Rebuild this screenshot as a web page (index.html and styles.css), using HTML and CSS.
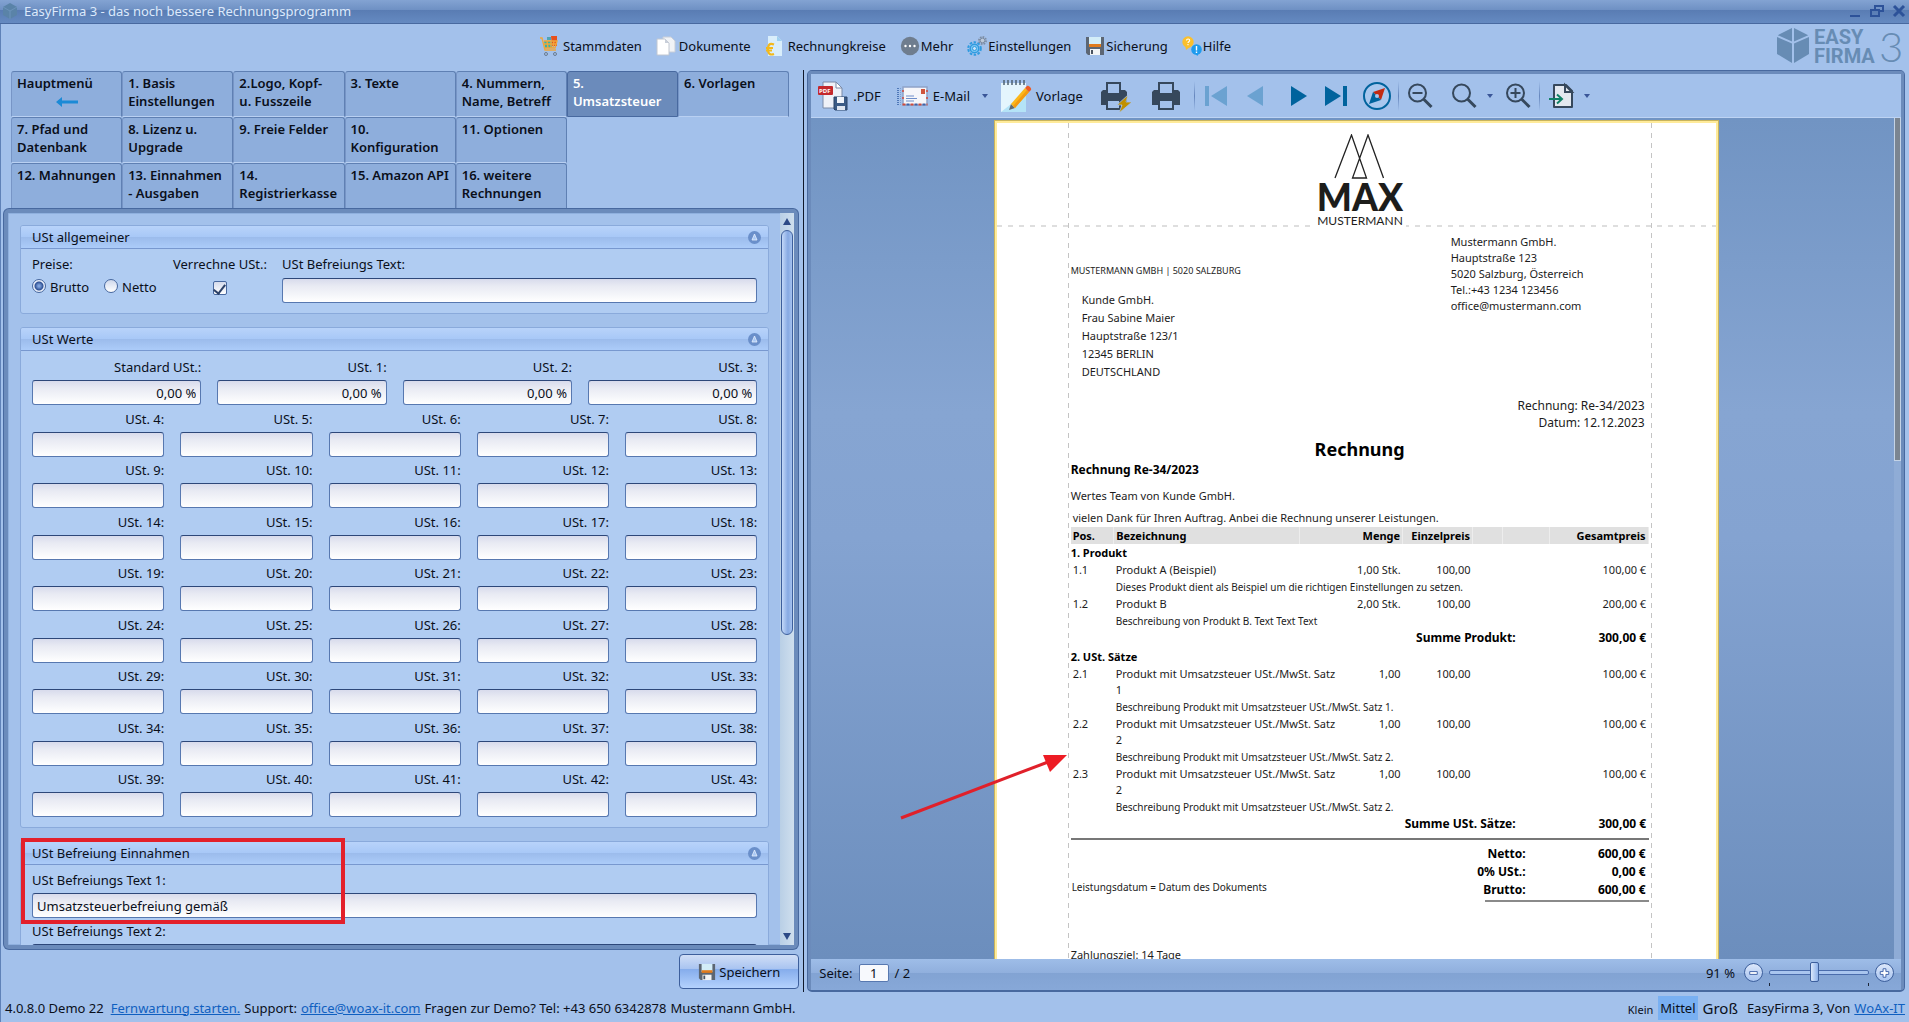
FILE: index.html
```html
<!DOCTYPE html>
<html lang="de">
<head>
<meta charset="utf-8">
<title>EasyFirma 3 - das noch bessere Rechnungsprogramm</title>
<link rel="stylesheet" href="styles.css">
</head>
<body>
<header class="titlebar">
  <svg class="app-mark" viewBox="0 0 16 16" width="16" height="16"><path d="M8 0l7 4v8l-7 4-7-4V4z" fill="#5a83a8"/><path d="M1 4l7 4 7-4M8 8v8" stroke="#6c93bb" fill="none"/></svg>
  <span class="caption">EasyFirma 3 - das noch bessere Rechnungsprogramm</span>
  <div class="window-buttons">
    <button aria-label="Minimieren"><svg viewBox="0 0 16 16" width="16" height="16"><path d="M3 12h10v2H3z" fill="#2d5299"/></svg></button>
    <button aria-label="Wiederherstellen"><svg viewBox="0 0 16 16" width="16" height="16"><path d="M2 7h8v6H2zM6 6V3h8v5h-3" fill="none" stroke="#2d5299" stroke-width="2"/></svg></button>
    <button aria-label="Schließen"><svg viewBox="0 0 16 16" width="16" height="16"><path d="M3 3l10 10M13 3L3 13" stroke="#2d5299" stroke-width="3"/></svg></button>
  </div>
</header>

<div class="menubar">
  <nav class="menu">
    <button><svg viewBox="0 0 20 20" width="20" height="20"><path d="M7 1h4v3H7z" fill="#4ea5b5"/><path d="M11 0h6v10h-5z" fill="#e8501c"/><path d="M4 5h8v7H5z" fill="#39b3a8"/><path d="M0 2h2l3 12h11M4 5h13l-2 7H5M7 5l1 7M11 5v7M14 5l-1 7M4 8h12" fill="none" stroke="#f0a63a" stroke-width="1.4"/><circle cx="6" cy="18" r="1.5" fill="none" stroke="#6a7c90"/><circle cx="15" cy="18" r="1.5" fill="none" stroke="#6a7c90"/></svg>Stammdaten</button>
    <button><svg viewBox="0 0 20 20" width="20" height="20"><path d="M7 1h8l4 4v11H7z" fill="#f1f3f6" stroke="#c8ced8"/><path d="M1 3h8l4 4v12H1z" fill="#fff" stroke="#c0c6d0"/><path d="M9 3v4h4z" fill="#c9cfda"/></svg>Dokumente</button>
    <button><svg viewBox="0 0 20 20" width="20" height="20"><path d="M3 0h9l5 5v15H3z" fill="#d9eefb"/><path d="M12 0l5 5h-5z" fill="#9dd0f0"/><path d="M9 8.500c-5-2-6 1-6 5s2 6 6 4.500M1 12h7M1 14.500h6" fill="none" stroke="#f4b91b" stroke-width="2.200"/></svg>Rechnungkreise</button>
    <button><svg viewBox="0 0 20 20" width="20" height="20"><circle cx="10" cy="10" r="9.200" fill="#6f7d8e"/><g fill="#fff"><circle cx="5.500" cy="10" r="1.200"/><circle cx="10" cy="10" r="1.200"/><circle cx="14.500" cy="10" r="1.200"/></g></svg>Mehr</button>
    <button><svg viewBox="0 0 20 20" width="20" height="20"><circle cx="7.500" cy="12.500" r="6.300" fill="none" stroke="#2f9be0" stroke-width="2" stroke-dasharray="2.500 1.500"/><circle cx="7.500" cy="12.500" r="4.300" fill="#7cc6f2" stroke="#2f9be0" stroke-width="1.500"/><circle cx="7.500" cy="12.500" r="2" fill="#c9e4fa" stroke="#2f9be0"/><circle cx="15.500" cy="4.500" r="3.500" fill="none" stroke="#7d8da3" stroke-width="2" stroke-dasharray="1.600 1.100"/><circle cx="15.500" cy="4.500" r="2.300" fill="#bcc9da" stroke="#7d8da3"/></svg>Einstellungen</button>
    <button><svg viewBox="0 0 20 20" width="20" height="20"><path d="M1 1h18v18H3l-2-2z" fill="#5c6673"/><path d="M4 1h12v9H4z" fill="#d3edf8"/><path d="M4 8h12v3H4z" fill="#e07b1d"/><path d="M5 13h10v6H5z" fill="#f2f4f6"/><path d="M6 14h2v4H6z" fill="#4a5360"/></svg>Sicherung</button>
    <button><svg viewBox="0 0 20 20" width="20" height="20"><circle cx="6" cy="6" r="5.700" fill="#fbc02d"/><path d="M3 9l1 5 4-3z" fill="#fbc02d"/><path d="M4.500 4.500c0-2 3.200-2 3.200 0 0 1.200-1.700 1.200-1.700 2.500M6 8v1.200" stroke="#fff" stroke-width="1.100" fill="none"/><circle cx="14.500" cy="13.500" r="5.300" fill="#1e9bee"/><path d="M12 17l3.500 3 1.500-4z" fill="#1e9bee"/><path d="M14.500 10v4.500M14.500 15.500V17" stroke="#fff" stroke-width="1.400"/></svg>Hilfe</button>
  </nav>
  <svg class="brand" viewBox="0 0 130 40" width="130" height="40" role="img" aria-label="Easy Firma 3">
    <g fill="#678cb4"><path d="M15 2v13.500L.8 9.200z"/><path d="M17 2v13.500l14.200-6.300z"/><path d="M0 11l15 6.600V37L0 28z"/><path d="M32 11l-15 6.600V37l15-9z"/>
    <text x="37" y="18" class="brand-name">EASY</text><text x="37" y="37" class="brand-name">FIRMA</text><text x="102" y="36" class="brand-digit">3</text></g>
  </svg>
</div>

<main class="work">
  <section class="settings">
    <nav class="tabs">
      <button>Hauptmenü<svg class="back" viewBox="0 0 22 10" width="22" height="10"><path d="M0 5l6-5v3.500h16v3H6V10z" fill="#1b8ad6"/></svg></button>
      <button>1. Basis<br>Einstellungen</button>
      <button>2.Logo, Kopf-<br>u. Fusszeile</button>
      <button>3. Texte</button>
      <button>4. Nummern,<br>Name, Betreff</button>
      <button class="active">5.<br>Umsatzsteuer</button>
      <button>6. Vorlagen</button>
      <button class="row-start">7. Pfad und<br>Datenbank</button>
      <button>8. Lizenz u.<br>Upgrade</button>
      <button>9. Freie Felder</button>
      <button>10.<br>Konfiguration</button>
      <button>11. Optionen</button>
      <button class="row-start">12. Mahnungen</button>
      <button>13. Einnahmen<br>- Ausgaben</button>
      <button>14.<br>Registrierkasse</button>
      <button>15. Amazon API</button>
      <button>16. weitere<br>Rechnungen</button>
    </nav>

    <div class="panel">
      <div class="panel-content">
        <section class="group">
          <h2>USt allgemeiner<svg class="fold" viewBox="0 0 13 13" width="13" height="13"><circle cx="6.500" cy="6.500" r="6.500" fill="#6a8fca"/><path d="M6.500 3l2.500 6H4z" fill="#a9c8f5" stroke="#e6effc" stroke-width=".8"/></svg></h2>
          <div class="general">
            <div>
              <span class="label">Preise:</span>
              <div class="choices">
                <label><input type="radio" name="preise" checked>Brutto</label>
                <label><input type="radio" name="preise">Netto</label>
              </div>
            </div>
            <div class="charge">
              <label class="label" for="verrechne">Verrechne USt.:</label>
              <input type="checkbox" id="verrechne" checked>
            </div>
            <div>
              <label class="label" for="befreiung">USt Befreiungs Text:</label>
              <input class="box" type="text" id="befreiung">
            </div>
          </div>
        </section>

        <section class="group">
          <h2>USt Werte<svg class="fold" viewBox="0 0 13 13" width="13" height="13"><circle cx="6.500" cy="6.500" r="6.500" fill="#6a8fca"/><path d="M6.500 3l2.500 6H4z" fill="#a9c8f5" stroke="#e6effc" stroke-width=".8"/></svg></h2>
          <div class="rates">
            <label class="wide">Standard USt.:<input class="box" type="text" value="0,00 %"></label>
            <label class="wide">USt. 1:<input class="box" type="text" value="0,00 %"></label>
            <label class="wide">USt. 2:<input class="box" type="text" value="0,00 %"></label>
            <label class="wide">USt. 3:<input class="box" type="text" value="0,00 %"></label>
            <label>USt. 4:<input class="box" type="text"></label>
            <label>USt. 5:<input class="box" type="text"></label>
            <label>USt. 6:<input class="box" type="text"></label>
            <label>USt. 7:<input class="box" type="text"></label>
            <label>USt. 8:<input class="box" type="text"></label>
            <label>USt. 9:<input class="box" type="text"></label>
            <label>USt. 10:<input class="box" type="text"></label>
            <label>USt. 11:<input class="box" type="text"></label>
            <label>USt. 12:<input class="box" type="text"></label>
            <label>USt. 13:<input class="box" type="text"></label>
            <label>USt. 14:<input class="box" type="text"></label>
            <label>USt. 15:<input class="box" type="text"></label>
            <label>USt. 16:<input class="box" type="text"></label>
            <label>USt. 17:<input class="box" type="text"></label>
            <label>USt. 18:<input class="box" type="text"></label>
            <label>USt. 19:<input class="box" type="text"></label>
            <label>USt. 20:<input class="box" type="text"></label>
            <label>USt. 21:<input class="box" type="text"></label>
            <label>USt. 22:<input class="box" type="text"></label>
            <label>USt. 23:<input class="box" type="text"></label>
            <label>USt. 24:<input class="box" type="text"></label>
            <label>USt. 25:<input class="box" type="text"></label>
            <label>USt. 26:<input class="box" type="text"></label>
            <label>USt. 27:<input class="box" type="text"></label>
            <label>USt. 28:<input class="box" type="text"></label>
            <label>USt. 29:<input class="box" type="text"></label>
            <label>USt. 30:<input class="box" type="text"></label>
            <label>USt. 31:<input class="box" type="text"></label>
            <label>USt. 32:<input class="box" type="text"></label>
            <label>USt. 33:<input class="box" type="text"></label>
            <label>USt. 34:<input class="box" type="text"></label>
            <label>USt. 35:<input class="box" type="text"></label>
            <label>USt. 36:<input class="box" type="text"></label>
            <label>USt. 37:<input class="box" type="text"></label>
            <label>USt. 38:<input class="box" type="text"></label>
            <label>USt. 39:<input class="box" type="text"></label>
            <label>USt. 40:<input class="box" type="text"></label>
            <label>USt. 41:<input class="box" type="text"></label>
            <label>USt. 42:<input class="box" type="text"></label>
            <label>USt. 43:<input class="box" type="text"></label>
          </div>
        </section>

        <section class="group exempt">
          <h2>USt Befreiung Einnahmen<svg class="fold" viewBox="0 0 13 13" width="13" height="13"><circle cx="6.500" cy="6.500" r="6.500" fill="#6a8fca"/><path d="M6.500 3l2.500 6H4z" fill="#a9c8f5" stroke="#e6effc" stroke-width=".8"/></svg></h2>
          <div class="texts">
            <label>USt Befreiungs Text 1:<input class="box" type="text" value="Umsatzsteuerbefreiung gemäß"></label>
            <label>USt Befreiungs Text 2:<input class="box" type="text"></label>
          </div>
          <div class="highlight"></div>
        </section>
      </div>
      <div class="scrollbar"><i class="up"></i><div class="track"><div class="thumb"></div></div><i class="down"></i></div>
    </div>

    <div class="actions">
      <button class="save"><svg viewBox="0 0 20 20" width="18" height="18"><path d="M1 1h18v18H3l-2-2z" fill="#5c6673"/><path d="M4 1h12v9H4z" fill="#d3edf8"/><path d="M4 8h12v3H4z" fill="#e07b1d"/><path d="M5 13h10v6H5z" fill="#f2f4f6"/><path d="M6 14h2v4H6z" fill="#4a5360"/></svg>Speichern</button>
    </div>
  </section>

  <section class="viewer">
    <div class="toolbar">
      <button><svg viewBox="0 0 32 32" width="32" height="32"><path d="M6 2h13l6 6v20H6z" fill="#eef1f8" stroke="#7b8ba8"/><path d="M19 2v6h6z" fill="#fff" stroke="#7b8ba8"/><rect x="1" y="6" width="15" height="9" rx="1" fill="#c4282c"/><text x="2" y="13" class="pdf-tag">PDF</text><path d="M17 17h13v13H18l-1-1z" fill="#3b5b85" stroke="#2b4468"/><path d="M20 17h7v6h-7z" fill="#f0f4fa"/><path d="M20 26h8v4h-8z" fill="#dfe6f0"/></svg>.PDF</button>
      <button class="mail"><svg viewBox="0 0 32 32" width="32" height="32"><path d="M1 8v17" stroke="#4f78b8" stroke-width="2" stroke-dasharray="1 1"/><path d="M3.500 8v17" stroke="#7e9fd3" stroke-dasharray="1 1"/><rect x="6" y="7" width="24" height="18" fill="#f5f6fa"/><rect x="6" y="7" width="24" height="18" fill="none" stroke="#8fa3c8" stroke-width="1.500"/><path d="M5.500 24.500h25" stroke="#d04a3c" stroke-width="2" stroke-dasharray="3 5"/><path d="M9.500 24.500h21" stroke="#3f62a8" stroke-width="2" stroke-dasharray="3 5"/><path d="M6 10v14M30 10v14" stroke="#d04a3c" stroke-width="1.500" stroke-dasharray="2 5"/><path d="M24 9h4v5h-4z" fill="#d0543c"/><path d="M9 16h8M9 18.500h11M9 21h8" stroke="#6f8fcb"/></svg>E-Mail<i class="caret"></i></button>
      <button class="template"><svg viewBox="0 0 32 32" width="32" height="32"><path d="M1 3h25v29H1z" fill="#e4f5fd"/><path d="M1 32L26 12v20z" fill="#b4e3f7"/><path d="M4 0v5M8 0v5M12 0v5M16 0v5M20 0v5M24 0v5" stroke="#4e6070" stroke-width="1.500"/><path d="M9 30l2-6 4 4z" fill="#5f6a74"/><path d="M11 24L25 8l4 4-14 16z" fill="#fbb71a"/><path d="M13 26L27 10l2 2-14 16z" fill="#f39a12"/><path d="M25 8l2-2c1-1 5 2 4 4l-2 2z" fill="#ee5a24"/></svg>Vorlage</button>
      <button class="icon-only quick"><svg viewBox="0 0 32 32" width="32" height="32" aria-label="Schnelldruck"><path d="M2 12l2-2h22l2 2v13H2z" fill="#36485c"/><path d="M8 14V3h13v11z" fill="#a3c1eb" stroke="#36485c" stroke-width="2"/><path d="M8 20h13v9H8z" fill="#a3c1eb" stroke="#36485c" stroke-width="2"/><path d="M29 15l-11 10h5l-3 8 13-11h-6z" fill="#c09000" stroke="#a3c1eb" stroke-width=".8"/></svg></button>
      <button class="icon-only print"><svg viewBox="0 0 32 32" width="32" height="32" aria-label="Drucken"><path d="M2 12l2-2h24l2 2v13H2z" fill="#36485c"/><path d="M9 14V3h14v11z" fill="#a3c1eb" stroke="#36485c" stroke-width="2"/><path d="M9 20h14v9H9z" fill="#a3c1eb" stroke="#36485c" stroke-width="2"/></svg></button>
      <i class="rule"></i>
      <button class="icon-only" disabled><svg viewBox="0 0 32 32" width="32" height="32" aria-label="Erste Seite"><path d="M5 6h4v20H5zM27 6v20L11 16z" fill="#6ba2d1"/></svg></button>
      <button class="icon-only prev" disabled><svg viewBox="0 0 32 32" width="32" height="32" aria-label="Vorherige Seite"><path d="M24 6v20L8 16z" fill="#6ba2d1"/></svg></button>
      <button class="icon-only next"><svg viewBox="0 0 32 32" width="32" height="32" aria-label="Nächste Seite"><path d="M8 6v20l16-10z" fill="#00639d"/></svg></button>
      <button class="icon-only last"><svg viewBox="0 0 32 32" width="32" height="32" aria-label="Letzte Seite"><path d="M5 6v20l16-10zM23 6h4v20h-4z" fill="#00639d"/></svg></button>
      <button class="icon-only compass"><svg viewBox="0 0 32 32" width="32" height="32" aria-label="Navigation"><circle cx="16" cy="16" r="13" fill="#a8c7ee" stroke="#00639d" stroke-width="2"/><path d="M24 8l-4 12-8-8z" fill="#c22a12"/><path d="M8 24l4-12 8 8z" fill="#00639d"/><circle cx="16" cy="16" r="2" fill="#a8c7ee"/></svg></button>
      <i class="rule"></i>
      <button class="icon-only reduce"><svg viewBox="0 0 32 32" width="32" height="32" aria-label="Verkleinern"><circle cx="13.500" cy="13" r="8.500" fill="none" stroke="#36485c" stroke-width="2"/><path d="M8.500 13h10" stroke="#36485c" stroke-width="2"/><path d="M19.500 19l8 8" stroke="#36485c" stroke-width="3"/></svg></button>
      <button class="icon-only zoom"><svg viewBox="0 0 32 32" width="32" height="32" aria-label="Zoom"><circle cx="13.500" cy="13" r="8.500" fill="none" stroke="#36485c" stroke-width="2"/><path d="M19.500 19l8 8" stroke="#36485c" stroke-width="3"/></svg><i class="caret"></i></button>
      <button class="icon-only enlarge"><svg viewBox="0 0 32 32" width="32" height="32" aria-label="Vergrößern"><circle cx="13.500" cy="13" r="8.500" fill="none" stroke="#36485c" stroke-width="2"/><path d="M8.500 13h10M13.500 8v10" stroke="#36485c" stroke-width="2"/><path d="M19.500 19l8 8" stroke="#36485c" stroke-width="3"/></svg></button>
      <i class="rule"></i>
      <button class="icon-only export"><svg viewBox="0 0 32 32" width="32" height="32" aria-label="Exportieren"><path d="M9 5h12l6 6v16H9z" fill="#e3e8ef" stroke="#36485c" stroke-width="2" stroke-linejoin="round"/><path d="M20 5v7h7z" fill="#e3e8ef" stroke="#36485c" stroke-width="2"/><path d="M4 19h12M12 14.500l5 4.500-5 4.500" fill="none" stroke="#0f8066" stroke-width="2"/></svg><i class="caret"></i></button>
    </div>

    <div class="preview">
      <article class="page">
        <div class="guide guide-left"></div><div class="guide guide-right"></div><div class="guide guide-top"></div>
        <svg class="annotation" viewBox="0 0 170 70" width="170" height="70"><path d="M1 66L148 10" stroke="#e0202a" stroke-width="3"/><path d="M167 3l-17 17-7-17z" fill="#ed1c24"/></svg>

        <svg class="logo" viewBox="0 0 92 94" width="92" height="94" role="img" aria-label="Max Mustermann">
          <path d="M21 44L37.500 1 52.500 44h-14L54 1l15.500 43" fill="none" stroke="#222" stroke-width="1.300"/>
          <text x="46" y="77" class="logo-max">MAX</text><text x="46" y="91" class="logo-sub">MUSTERMANN</text>
        </svg>
        <div class="addresses">
          <div class="recipient">
            <p class="return">MUSTERMANN GMBH | 5020 SALZBURG</p>
            <address>Kunde GmbH.<br>Frau Sabine Maier<br>Hauptstraße 123/1<br>12345 BERLIN<br>DEUTSCHLAND</address>
          </div>
          <address class="sender">Mustermann GmbH.<br>Hauptstraße 123<br>5020 Salzburg, Österreich<br>Tel.:+43 1234 123456<br>office@mustermann.com</address>
        </div>
        <p class="meta">Rechnung: Re-34/2023<br>Datum: 12.12.2023</p>
        <h1>Rechnung</h1>
        <h3>Rechnung Re-34/2023</h3>
        <p class="salutation">Wertes Team von Kunde GmbH.</p>
        <p class="intro">vielen Dank für Ihren Auftrag. Anbei die Rechnung unserer Leistungen.</p>
        <table class="items">
          <colgroup><col class="c-pos"><col class="c-name"><col class="c-qty"><col class="c-price"><col class="c-a"><col class="c-b"><col></colgroup>
          <thead><tr><th>Pos.</th><th>Bezeichnung</th><th class="r">Menge</th><th class="r">Einzelpreis</th><th></th><th></th><th class="r">Gesamtpreis</th></tr></thead>
          <tbody>
            <tr class="section"><td colspan="7">1. Produkt</td></tr>
            <tr><td>1.1</td><td>Produkt A (Beispiel)</td><td class="r">1,00 Stk.</td><td class="r">100,00</td><td></td><td></td><td class="r">100,00 €</td></tr>
            <tr class="desc"><td></td><td colspan="6">Dieses Produkt dient als Beispiel um die richtigen Einstellungen zu setzen.</td></tr>
            <tr><td>1.2</td><td>Produkt B</td><td class="r">2,00 Stk.</td><td class="r">100,00</td><td></td><td></td><td class="r">200,00 €</td></tr>
            <tr class="desc"><td></td><td colspan="6">Beschreibung von Produkt B. Text Text Text</td></tr>
            <tr class="sum"><td colspan="6" class="r">Summe Produkt:</td><td class="r">300,00 €</td></tr>
            <tr class="section"><td colspan="7">2. USt. Sätze</td></tr>
            <tr><td>2.1</td><td>Produkt mit Umsatzsteuer USt./MwSt. Satz<br>1</td><td class="r">1,00</td><td class="r">100,00</td><td></td><td></td><td class="r">100,00 €</td></tr>
            <tr class="desc"><td></td><td colspan="6">Beschreibung Produkt mit Umsatzsteuer USt./MwSt. Satz 1.</td></tr>
            <tr><td>2.2</td><td>Produkt mit Umsatzsteuer USt./MwSt. Satz<br>2</td><td class="r">1,00</td><td class="r">100,00</td><td></td><td></td><td class="r">100,00 €</td></tr>
            <tr class="desc"><td></td><td colspan="6">Beschreibung Produkt mit Umsatzsteuer USt./MwSt. Satz 2.</td></tr>
            <tr><td>2.3</td><td>Produkt mit Umsatzsteuer USt./MwSt. Satz<br>2</td><td class="r">1,00</td><td class="r">100,00</td><td></td><td></td><td class="r">100,00 €</td></tr>
            <tr class="desc"><td></td><td colspan="6">Beschreibung Produkt mit Umsatzsteuer USt./MwSt. Satz 2.</td></tr>
            <tr class="sum"><td colspan="6" class="r">Summe USt. Sätze:</td><td class="r">300,00 €</td></tr>
          </tbody>
        </table>
        <div class="closing">
          <p class="service-date">Leistungsdatum = Datum des Dokuments</p>
          <table class="totals">
            <tr><th>Netto:</th><td>600,00 €</td></tr>
            <tr><th>0% USt.:</th><td>0,00 €</td></tr>
            <tr><th>Brutto:</th><td>600,00 €</td></tr>
          </table>
        </div>
        <p class="terms">Zahlungsziel: 14 Tage</p>
      </article>
      <div class="preview-scroll"><div class="preview-thumb"></div></div>
    </div>

    <div class="statusbar">
      <label for="seite">Seite:</label><input class="page-no" type="text" id="seite" value="1"><span>/ 2</span>
      <span class="percent">91 %</span>
      <button class="round" aria-label="Kleiner"><svg viewBox="0 0 18 18" width="18" height="18"><path d="M5 7.500h8v3H5z" fill="#fff" stroke="#3f62a8"/></svg></button>
      <input class="slider" type="range" min="0" max="100" value="45" aria-label="Zoom">
      <button class="round" aria-label="Größer"><svg viewBox="0 0 18 18" width="18" height="18"><path d="M7.500 4.500h3v3h3v3h-3v3h-3v-3h-3v-3h3z" fill="#fff" stroke="#3f62a8"/></svg></button>
    </div>
  </section>
</main>

<footer class="footer">
  <span class="version">4.0.8.0 Demo 22</span>
  <a href="#fernwartung">Fernwartung starten.</a>
  <span>Support:</span>
  <a href="mailto:office@woax-it.com">office@woax-it.com</a>
  <span>Fragen zur Demo? Tel: +43 650 6342878</span>
  <span>Mustermann GmbH.</span>
  <div class="sizes"><button class="small">Klein</button><button class="medium">Mittel</button><button class="large">Groß</button></div>
  <span>EasyFirma 3, Von</span>
  <a href="#woax">WoAx-IT</a>
</footer>
</body>
</html>
```
FILE: styles.css
```css
* { box-sizing: border-box; }
body {
  margin: 0;
  height: 100vh;
  display: flex;
  flex-direction: column;
  overflow: hidden;
  background: #a3c1eb;
  color: #0a0f1a;
  font: 13px/18px "Noto Sans", "Open Sans", sans-serif;
}
button, input { font: inherit; color: inherit; }
button { border: 0; padding: 0; background: none; white-space: nowrap; }
h1, h2, h3, p { margin: 0; }
address { font-style: normal; }
a { color: #0f5fc0; }

/* window caption */
.titlebar {
  flex: none;
  height: 24px;
  display: flex;
  align-items: center;
  padding: 0 0 2px 2px;
  border-bottom: 1px solid #48699f;
  background: linear-gradient(#83a3d2, #6e90c3 10px, #597cb3 10px, #658ac1);
  color: #dce9fb;
}
.app-mark { margin-right: 6px; }
.window-buttons { margin-left: auto; display: flex; gap: 4px; }
.window-buttons button { display: flex; width: 18px; }

/* main menu */
.menubar { flex: none; height: 46px; display: flex; border-left: 1px solid #5f82b8; }
.menu { flex: 1; display: flex; justify-content: center; align-items: center; gap: 14px; padding: 0 7px 2px 0; }
.menu button { display: flex; align-items: center; gap: 3px; }
.menu button:nth-child(n+4) { gap: 1px; }
.brand { flex: none; margin: 2px 2px 0 0; overflow: visible; }
.brand-name { font: 700 20px Roboto, sans-serif; }
.brand-digit { font: 300 42px Lato, sans-serif; }

.work { flex: 1; min-height: 0; display: grid; grid-template-columns: 421fr 579fr; border-left: 1px solid #5f82b8; }

/* left side */
.settings { display: flex; flex-direction: column; min-height: 0; min-width: 0; padding: 1px 4px 3px 2px; border-right: 1px solid #10182a; }
.tabs { flex: none; display: grid; grid-template-columns: repeat(7, 1fr); grid-auto-rows: 46px; margin: 0 10px 0 8px; }
.tabs button {
  display: flex;
  flex-direction: column;
  text-align: left;
  padding: 2px 4px 0 5px;
  border: 1px solid #5f80b3;
  border-bottom-color: #b9d0f2;
  border-left-color: #7795c6;
  border-radius: 3px 3px 0 0;
  background: #8eaedc;
  font-weight: 600;
}
.tabs .active { background: #6b8bbb; border-color: #48699f; color: #fff; }
.tabs .row-start { grid-column: 1; }
.back { margin: 5px auto 0 39px; }

.panel {
  flex: 1;
  min-height: 0;
  display: flex;
  border: 4px solid #6b8bbb;
  border-radius: 5px;
  box-shadow: inset 0 0 0 1px #8fb0de, 0 0 0 1px #48699f;
  margin: 0 1px;
  background: #a3c1eb;
}
.panel-content { flex: 1; min-width: 0; overflow: hidden; display: flex; flex-direction: column; gap: 13px; padding: 12px 11px 0 12px; }
.group { flex: none; border: 1px solid #8aaadb; border-radius: 3px; background: #b0ccf2; }
.group h2 {
  display: flex;
  align-items: center;
  justify-content: space-between;
  height: 23px;
  padding: 0 7px 0 11px;
  border-bottom: 1px solid #7898cf;
  border-radius: 2px 2px 0 0;
  background: linear-gradient(#b8d3fa, #a8c8f7 50%, #9cbcec 52%, #acccf9);
  font-size: 13px;
  font-weight: 400;
}
.label { display: block; }
.box {
  display: block;
  width: 100%;
  height: 25px;
  border: 1px solid #5778b0;
  border-top-color: #2d4779;
  border-radius: 3px;
  padding: 0 4px;
  background: linear-gradient(#d8dbec, #e8eaf3 30%, #fff);
  outline: 0;
}
.general { display: grid; grid-template-columns: 125px 93px 1fr; gap: 16px; padding: 6px 11px 10px; }
.general .label { margin-bottom: 5px; }
.choices { display: flex; gap: 15px; }
.choices label { display: flex; align-items: center; gap: 4px; }
input[type="radio"] {
  appearance: none;
  margin: 0 0 2px;
  width: 14px;
  height: 14px;
  border: 1px solid #48689f;
  border-radius: 50%;
  background: linear-gradient(#cfd8ec, #fff);
}
input[type="radio"]:checked { background: radial-gradient(circle, #7fa2dc 1px, #2d4f93 4px, #e8eefa 5px); }
input[type="checkbox"] {
  appearance: none;
  display: grid;
  margin: 8px auto 0;
  width: 14px;
  height: 14px;
  border: 1px solid #48689f;
  border-radius: 2px;
  background: linear-gradient(#d5dbec, #fff);
}
input[type="checkbox"]:checked::before {
  content: "";
  margin: 0 auto;
  width: 5px;
  height: 10px;
  border: solid #2c4168;
  border-width: 0 2px 2px 0;
  rotate: 38deg;
}
.charge { white-space: nowrap; }
/* the nine rows share the height of the group evenly */
.rates {
  display: grid;
  grid-template-columns: repeat(20, 1fr);
  grid-template-rows: repeat(9, 1fr);
  column-gap: 16px;
  min-height: 464px;
  margin: 7px 11px 5px;
}
.rates label { grid-column: span 4; text-align: right; }
.rates .wide { grid-column: span 5; }
.rates .box, .texts .box { margin-top: 4px; text-align: inherit; }
.exempt { position: relative; }
.texts { display: grid; gap: 4px; padding: 6px 11px 10px; }
.highlight { position: absolute; left: 0; top: -4px; width: 324px; height: 86px; border: 4px solid #e3202b; }

.scrollbar { flex: none; width: 14px; display: flex; flex-direction: column; align-items: center; background: linear-gradient(90deg, #b9cfe6, #cfdfee); }
.up, .down { border: 4px solid transparent; }
.up { border-top: 0; border-bottom: 7px solid #2d4a86; margin: 5px 0; }
.down { border-bottom: 0; border-top: 7px solid #2d4a86; margin: 5px 0; }
.track { flex: 1; width: 12px; }
.thumb { height: 58%; border: 1px solid #3d5f9c; border-radius: 6px; background: linear-gradient(90deg, #c3d8f8, #86a9e2 60%, #a5c2ef); }

.actions { flex: none; display: flex; justify-content: flex-end; padding-top: 5px; }
.save {
  display: flex;
  align-items: center;
  justify-content: center;
  gap: 3px;
  width: 120px;
  height: 35px;
  border: 1px solid #3d5f9c;
  border-radius: 4px;
  background: linear-gradient(#d0def6, #a9c4f1 42%, #86adec 44%, #b4d2fd);
}

/* right side */
.viewer {
  display: flex;
  flex-direction: column;
  min-width: 0;
  min-height: 0;
  margin: 0 4px 0 3px;
  border: 1px solid #48699f;
  border-bottom-width: 2px;
  border-radius: 5px;
  box-shadow: inset 0 0 0 3px #6b8bbb, inset 0 0 0 4px #8fb0de;
  padding: 3px 3px 0;
}
.toolbar { flex: none; height: 44px; display: flex; align-items: center; padding: 0 0 0 6px; border-bottom: 1px solid #bdd3f3; background: #a3c1eb; }
.toolbar button { display: flex; align-items: center; gap: 4px; margin-right: 16px; }
.toolbar svg { flex: none; }
.toolbar .icon-only { margin-right: 7px; }
.toolbar .quick { margin-right: 19px; }
.toolbar .print, .toolbar .prev, .toolbar .reduce, .toolbar .mail { margin-right: 12px; }
.toolbar .next, .toolbar .compass, .toolbar .enlarge { margin-right: 5px; }
.toolbar .last, .toolbar .zoom { margin-right: 9px; }
.mail .caret { margin-left: 8px; }
.zoom .caret, .export .caret { margin-left: 3px; }
.caret { border: 3px solid transparent; border-bottom: 0; border-top: 4px solid #3a5698; }
.rule { width: 1px; height: 30px; margin-right: 5px; background: linear-gradient(#a3c1eb, #6586bd, #a3c1eb); }
.pdf-tag { font: 700 6px "Open Sans", sans-serif; fill: #fff; }

.preview {
  flex: 1;
  min-height: 0;
  overflow: hidden;
  position: relative;
  display: flex;
  justify-content: center;
  align-items: flex-start;
  padding-top: 2px;
  background: linear-gradient(#7194c3, #86a5d2 35%, #84a3d1 50%, #6c8ebd);
}
.preview-scroll { position: absolute; right: 0; top: 0; bottom: 0; width: 7px; background: #8facd6; }
.preview-thumb { height: 343px; background: #7b8591; border: 1px solid #c4d3e6; border-top: 0; width: 7px; }

.page {
  flex: none;
  position: relative;
  width: 725px;
  aspect-ratio: 210 / 297;
  padding: 8px 67px 0 74px;
  border: 3px solid #ffeb9a;
  outline: 1px solid #c9b45d;
  outline-offset: -1px;
  background: #fff;
  color: #1c1c1c;
  font-size: 11px;
  line-height: 16px;
}
.guide { position: absolute; }
.guide-left, .guide-right { top: 0; bottom: 0; width: 1px; background: repeating-linear-gradient(#c4c4c4 0 5px, transparent 5px 10px); }
.guide-left { left: 71px; }
.guide-right { right: 64px; }
.guide-top { left: 0; right: 0; top: 102px; height: 2px; background: repeating-linear-gradient(90deg, #dedede 0 5px, transparent 5px 11px); }
.annotation { position: absolute; left: -97px; top: 629px; }
.logo { display: block; position: relative; margin: 3px auto 0; background: #fff; }
.logo-max { font: 900 37px Lato, sans-serif; text-anchor: middle; fill: #1d1d1b; }
.logo-sub { font: 400 12px Lato, sans-serif; text-anchor: middle; fill: #1d1d1b; }
.addresses { display: grid; grid-template-columns: 1fr 198px; }
.recipient { padding: 34px 0 0; line-height: 18px; }
.recipient address { padding: 11px 0 0 11px; }
.recipient .return { font-size: 9px; }
.sender { padding-top: 6px; }
.meta { text-align: right; padding: 16px 4px 0 0; font-size: 12px; line-height: 17px; }
.page h1 { margin-top: 6px; text-align: center; font-size: 18px; line-height: 24px; color: #000; }
.page h3 { font-size: 12px; line-height: 18px; color: #000; }
.salutation { margin-top: 8px; line-height: 18px; }
.intro { margin: 4px 0 0 2px; line-height: 18px; }
.items { width: 100%; table-layout: fixed; border-collapse: collapse; white-space: nowrap; }
.c-pos { width: 43px; }
.c-name { width: 186px; }
.c-qty { width: 103px; }
.c-price { width: 70px; }
.c-a { width: 30px; }
.c-b { width: 47px; }
.items th { height: 17px; padding: 0 2px; text-align: left; color: #000; font-weight: 700; background: #e0e0e0; border-right: 1px solid #ededed; }
.items td { padding: 0 2px 1px; vertical-align: top; }
.items .r { text-align: right; }
.items .section td { padding: 1px 0; font-weight: 700; color: #000; }
.items .desc td { font-size: 10px; }
.items .sum td { padding-bottom: 2px; font-size: 12px; font-weight: 700; color: #000; }
.items .sum td:first-child { padding-right: 34px; }
.closing { display: flex; justify-content: space-between; margin-top: 4px; border-top: 2px solid #777; padding-top: 5px; }
.service-date { padding-top: 34px; padding-left: 1px; font-size: 10px; }
.totals {
  width: 177px;
  border-spacing: 0;
  padding-bottom: 3px;
  background: linear-gradient(#8a8a8a, #8a8a8a) right bottom / 164px 2px no-repeat;
  font-size: 12px;
  font-weight: 700;
  line-height: 18px;
  text-align: right;
  color: #000;
}
.totals th { padding: 0; width: 54px; white-space: nowrap; }
.totals td { padding: 0 3px 0 0; }
.terms { margin-top: 45px; }

.statusbar {
  flex: none;
  height: 31px;
  display: flex;
  align-items: center;
  padding: 0 7px 4px 8px;
  background: linear-gradient(#9ebde8, #90afdd 14px, #82a3d3 14px, #87a8d8);
}
.page-no { width: 30px; height: 18px; margin: 0 6px; padding: 0; border: 1px solid #5778b0; border-radius: 2px; background: #f7f9fd; text-align: center; }
.percent { margin-left: auto; margin-right: 9px; }
.round { display: flex; width: 19px; height: 19px; border: 1px solid #3d5f9c; border-radius: 50%; background: linear-gradient(#dce7fa, #a8c4f0); }
.slider {
  appearance: none;
  width: 100px;
  height: 26px;
  margin: 0 6px;
  background:
    linear-gradient(#1b2436, #1b2436) left bottom / 1px 3px no-repeat,
    linear-gradient(#1b2436, #1b2436) right bottom / 1px 3px no-repeat;
}
.slider::-webkit-slider-runnable-track { height: 5px; border: 1px solid #4a6cab; border-radius: 2px; background: #a9c5ee; }
.slider::-webkit-slider-thumb { appearance: none; width: 9px; height: 20px; margin-top: -9px; border: 1px solid #3d5f9c; border-radius: 2px; background: linear-gradient(90deg, #dbe8fb, #8db1ea); }

/* bottom line */
.footer { flex: none; height: 30px; display: flex; align-items: center; padding: 1px 4px 0 4px; gap: 4px; white-space: nowrap; border-left: 1px solid #5f82b8; }
.version { margin-right: 3px; }
.sizes { margin-left: auto; display: flex; align-items: center; gap: 5px; margin-right: 5px; }
.small { font-size: 11px; padding-top: 4px; }
.medium { height: 24px; padding: 0 2px; background: #79b0f2; }
.large { font-size: 15px; }
```
